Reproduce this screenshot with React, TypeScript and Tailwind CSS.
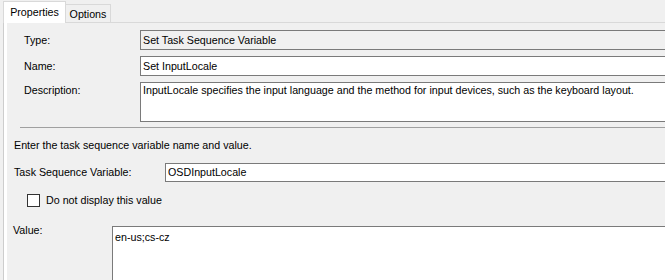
import React from "react";

// Task sequence step: "Set Task Sequence Variable" property page

export default function App() {
  return (
    <div className="flex h-[280px] w-[665px] flex-col overflow-hidden bg-[#f0f0f0] font-['Liberation_Sans',Arial,sans-serif] text-[10.7px] leading-[13px] text-black">
      <TabStrip />

      <div className="ml-[3px] flex flex-1 border-l border-[#cdcdcd] bg-white pl-[3px]">
        <div className="flex-1 bg-[#f0f0f0]">
          <section className="pl-[17px] pt-[7px]">
            <FieldRow label="Type:">
              <div className={`${boxClassName} h-[20px] bg-[#f0f0f0]`}>Set Task Sequence Variable</div>
            </FieldRow>
            <div className="mt-[6px]">
              <FieldRow label="Name:">
                <div className={`${boxClassName} h-[20px] bg-white`}>Set InputLocale</div>
              </FieldRow>
            </div>
            <div className="mt-[6px] flex">
              <span className="w-[116px] shrink-0 pt-[2px]">Description:</span>
              <div className="h-[40px] w-[620px] shrink-0 border border-[#7a7a7a] bg-white px-[2px] pt-[1px]">
                InputLocale specifies the input language and the method for input devices, such as the keyboard layout.
              </div>
            </div>
          </section>

          <div className="ml-[13px] mt-[5px] h-px bg-[#a0a0a0]" />

          <section className="pl-[7px]">
            <p className="mt-[11px]">Enter the task sequence variable name and value.</p>

            <div className="mt-[11px] flex h-[19px] items-center">
              <span className="w-[151px] shrink-0">Task Sequence Variable:</span>
              <div className={`${boxClassName} h-[19px] bg-white`}>OSDInputLocale</div>
            </div>

            <label className="ml-[13px] mt-[12px] flex items-center gap-[6px]">
              <span className="h-[13px] w-[13px] shrink-0 border border-[#333333] bg-white" />
              <span>Do not display this value</span>
            </label>

            <div className="mt-[19px] flex">
              <span className="-ml-px -mt-[2px] w-[99px] shrink-0">Value:</span>
              <div className="h-[80px] w-[620px] shrink-0 border border-[#7a7a7a] bg-white px-[2px] pt-[4px]">
                en-us;cs-cz
              </div>
            </div>
          </section>
        </div>
      </div>
    </div>
  );
}

function TabStrip() {
  return (
    <div className="flex h-[23px] shrink-0 items-end pl-[3px]">
      <div className="flex h-[22px] w-[63px] items-center justify-center border-x border-t border-[#d9d9d9] bg-white pb-[1px]">
        Properties
      </div>
      <div className="flex h-[19px] w-[45px] items-center justify-center border-b border-r border-t border-[#d9d9d9] bg-[#f0f0f0] pt-[1px]">
        Options
      </div>
      <div className="h-px flex-1 bg-[#d9d9d9]" />
    </div>
  );
}

function FieldRow({ label, children }: { label: string; children: React.ReactNode }) {
  return (
    <div className="flex items-center">
      <span className="w-[116px] shrink-0">{label}</span>
      {children}
    </div>
  );
}

const boxClassName =
  "flex w-[620px] shrink-0 items-center border border-[#7a7a7a] px-[2px] whitespace-nowrap";
